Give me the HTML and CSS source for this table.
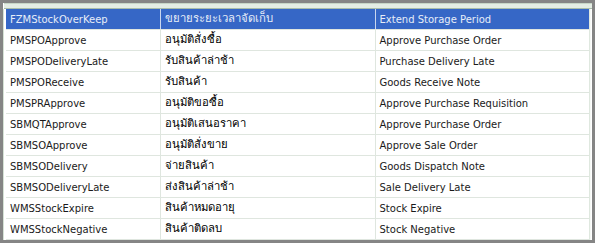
FILE: index.html
```html
<!DOCTYPE html>
<html>
<head>
<meta charset="utf-8">
<link rel="stylesheet" href="styles.css">
</head>
<body>
<div class="frame">
  <div class="topband"></div>
  <div class="body">
    <table class="grid">
      <colgroup>
        <col class="c1"><col class="c2"><col class="c3">
      </colgroup>
      <thead>
        <tr><th>FZMStockOverKeep</th><th class="thai">ขยายระยะเวลาจัดเก็บ</th><th>Extend Storage Period</th></tr>
      </thead>
      <tbody>
        <tr><td>PMSPOApprove</td><td class="thai">อนุมัติสั่งซื้อ</td><td>Approve Purchase Order</td></tr>
        <tr><td>PMSPODeliveryLate</td><td class="thai">รับสินค้าล่าช้า</td><td>Purchase Delivery Late</td></tr>
        <tr><td>PMSPOReceive</td><td class="thai">รับสินค้า</td><td>Goods Receive Note</td></tr>
        <tr><td>PMSPRApprove</td><td class="thai">อนุมัติขอซื้อ</td><td>Approve Purchase Requisition</td></tr>
        <tr><td>SBMQTApprove</td><td class="thai">อนุมัติเสนอราคา</td><td>Approve Purchase Order</td></tr>
        <tr><td>SBMSOApprove</td><td class="thai">อนุมัติสั่งขาย</td><td>Approve Sale Order</td></tr>
        <tr><td>SBMSODelivery</td><td class="thai">จ่ายสินค้า</td><td>Goods Dispatch Note</td></tr>
        <tr><td>SBMSODeliveryLate</td><td class="thai">ส่งสินค้าล่าช้า</td><td>Sale Delivery Late</td></tr>
        <tr><td>WMSStockExpire</td><td class="thai">สินค้าหมดอายุ</td><td>Stock Expire</td></tr>
        <tr><td>WMSStockNegative</td><td class="thai">สินค้าติดลบ</td><td>Stock Negative</td></tr>
      </tbody>
    </table>
    <div class="rightedge"></div>
  </div>
</div>
</body>
</html>
```
FILE: styles.css
```css
html, body {
  margin: 0;
  padding: 0;
  background: #ffffff;
}
.frame {
  width: 589px;
  border: 3px solid #858585;
  background: #ffffff;
  font-family: "DejaVu Sans", "Noto Sans", sans-serif;
  font-size: 10px;
  color: #1a1a1a;
}
.topband {
  height: 4px;
  margin-left: 1px;
  background: #e4ede4;
  border-top: 1px solid #c7d6c7;
  border-bottom: 1px solid #a9bca9;
}
.body {
  display: flex;
  padding-left: 3px;
  box-shadow: inset 1px 0 0 #d6e2d6;
}
.grid {
  border-collapse: collapse;
  table-layout: fixed;
  width: 583px;
}
.c1 { width: 154px; }
.c2 { width: 215px; }
.c3 { width: 214px; }
.grid th {
  height: 20px;
  padding: 0 0 0 4px;
  background: #3667c6;
  color: #e6edf8;
  font-weight: normal;
  text-align: left;
  border-left: 1px solid #c9d6ee;
  border-bottom: 1px solid #e0e6e0;
  white-space: nowrap;
}
.grid th:first-child { border-left: none; }
.grid td {
  height: 20px;
  padding: 0 0 0 4px;
  border-left: 1px solid #dfe6df;
  border-bottom: 1px solid #dfe6df;
  white-space: nowrap;
}
.grid td:first-child { border-left: none; }
.grid .thai {
  font-size: 11.3px;
  line-height: 14px;
  font-weight: 500;
  color: #000000;
}
.grid th.thai { color: #e6edf8; }
.rightedge {
  width: 2px;
  height: 231px;
  box-shadow: inset 1px 0 0 #dfe8df;
  background: #f6f9f6;
}
```
